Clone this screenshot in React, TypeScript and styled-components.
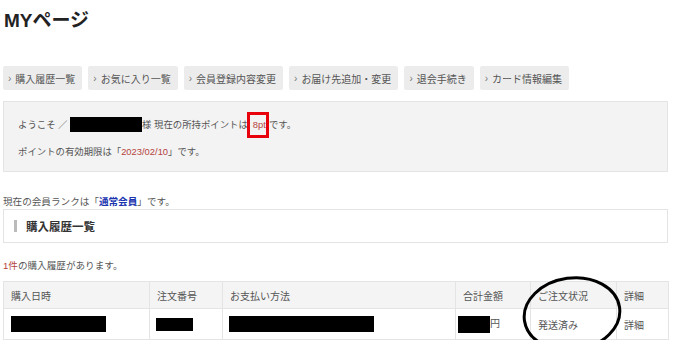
import React from 'react';
import styled, { createGlobalStyle } from 'styled-components';

const GlobalStyle = createGlobalStyle`
  body {
    margin: 0;
    background: #fff;
    font-family: "Liberation Sans", "Noto Sans CJK JP", sans-serif;
    color: #555;
  }
`;

// --- Layout ---
const Page = styled.div`
  width: 665px;
  padding: 0 3px;
  font-size: 10px;
`;

const Title = styled.h1`
  margin: 0;
  padding: 9px 0 0 1px;
  height: 66px;
  box-sizing: border-box;
  font-size: 19px;
  font-weight: 700;
  color: #222;
  line-height: 24px;
`;

// --- Menu buttons ---
const Menu = styled.nav`
  display: flex;
  gap: 6px;
  height: 24px;
`;

const MenuButton = styled.a`
  display: flex;
  align-items: center;
  gap: 4px;
  padding: 0 7px 0 5px;
  background: #ececec;
  border-radius: 2px;
  color: #555;
  font-size: 10px;
  text-decoration: none;
  white-space: nowrap;

  &::before {
    content: '›';
    font-size: 10px;
    color: #777;
  }
`;

// --- Welcome box ---
const InfoBox = styled.div`
  margin-top: 11px;
  height: 71px;
  box-sizing: border-box;
  padding: 15px 14px 0;
  background: #f3f3f3;
  border: 1px solid #e4e4e4;
  color: #555;
  font-size: 9.4px;
`;

const InfoLine = styled.p`
  margin: 0 0 13px;
  line-height: 14px;
  display: flex;
  align-items: center;
  white-space: nowrap;
`;

const Redacted = styled.span<{ $w: number; $h: number; $shift?: number }>`
  display: inline-block;
  width: ${({ $w }) => $w}px;
  height: ${({ $h }) => $h}px;
  margin-left: ${({ $shift = 0 }) => $shift}px;
  background: #000;
  vertical-align: middle;
`;

const Red = styled.span`
  color: #b5443d;
`;

const Marked = styled.span`
  position: relative;
  color: #b5443d;
  margin: 0 3px 0 5px;

  &::after {
    content: '';
    position: absolute;
    left: -6px;
    right: -3px;
    top: -6px;
    bottom: -6px;
    border: 3px solid #e8000b;
  }
`;

const Rank = styled.p`
  margin: 24px 0 0;
  line-height: 12px;
  color: #555;
  font-size: 9.6px;
`;

const Blue = styled.strong`
  color: #1b35b0;
`;

// --- Section heading ---
const SectionHead = styled.h2`
  margin: 1px 0 0;
  height: 34px;
  box-sizing: border-box;
  display: flex;
  align-items: center;
  gap: 9px;
  padding-left: 10px;
  border: 1px solid #e4e4e4;
  font-size: 11.5px;
  font-weight: 700;
  color: #333;

  &::before {
    content: '';
    width: 3px;
    height: 12px;
    background: #bbb;
  }
`;

const Count = styled.p`
  margin: 17px 0 0;
  line-height: 12px;
  color: #555;
  font-size: 9.6px;
`;

// --- Table ---
const TableWrap = styled.div`
  position: relative;
  margin-top: 9px;
`;

const Table = styled.table`
  width: 665px;
  border-collapse: collapse;
  table-layout: fixed;
`;

const Th = styled.th<{ $w: number }>`
  box-sizing: border-box;
  width: ${({ $w }) => $w}px;
  height: 27px;
  padding: 0 7px;
  background: #f4f4f4;
  border: 1px solid #e4e4e4;
  text-align: left;
  font-weight: 400;
  font-size: 10px;
  color: #555;
`;

const Td = styled.td`
  height: 30px;
  padding: 0 7px;
  border: 1px solid #e4e4e4;
  font-size: 10px;
  color: #555;
  white-space: nowrap;
`;

const Circle = styled.svg`
  position: absolute;
  left: 516px;
  top: -7px;
  pointer-events: none;
`;

const columns = [
  { label: '購入日時', w: 146 },
  { label: '注文番号', w: 73 },
  { label: 'お支払い方法', w: 233 },
  { label: '合計金額', w: 75 },
  { label: 'ご注文状況', w: 86 },
  { label: '詳細', w: 52 },
];

const menu = ['購入履歴一覧', 'お気に入り一覧', '会員登録内容変更', 'お届け先追加・変更', '退会手続き', 'カード情報編集'];

export default function App() {
  return (
    <Page>
      <GlobalStyle />
      <Title>MYページ</Title>

      <Menu>
        {menu.map(m => (
          <MenuButton key={m}>{m}</MenuButton>
        ))}
      </Menu>

      <InfoBox>
        <InfoLine>
          ようこそ ／&nbsp;
          <Redacted $w={72} $h={15} />
          様 現在の所持ポイントは<Marked>8pt</Marked>です。
        </InfoLine>
        <InfoLine>
          ポイントの有効期限は「<Red>2023/02/10</Red>」です。
        </InfoLine>
      </InfoBox>

      <Rank>
        現在の会員ランクは「<Blue>通常会員</Blue>」です。
      </Rank>

      <SectionHead>購入履歴一覧</SectionHead>

      <Count>
        <Red>1件</Red>の購入履歴があります。
      </Count>

      <TableWrap>
        <Table>
          <thead>
            <tr>
              {columns.map(c => (
                <Th key={c.label} $w={c.w}>{c.label}</Th>
              ))}
            </tr>
          </thead>
          <tbody>
            <tr>
              <Td><Redacted $w={95} $h={16} /></Td>
              <Td><Redacted $w={37} $h={13} $shift={-1} /></Td>
              <Td><Redacted $w={145} $h={16} $shift={-1} /></Td>
              <Td><Redacted $w={32} $h={17} $shift={-5} />円</Td>
              <Td>発送済み</Td>
              <Td>詳細</Td>
            </tr>
          </tbody>
        </Table>
        <Circle width="106" height="80" viewBox="0 0 106 80">
          <ellipse cx="53" cy="40" rx="48" ry="36" fill="none" stroke="#000" strokeWidth="3" transform="rotate(-8 53 40)" />
        </Circle>
      </TableWrap>
    </Page>
  );
}
